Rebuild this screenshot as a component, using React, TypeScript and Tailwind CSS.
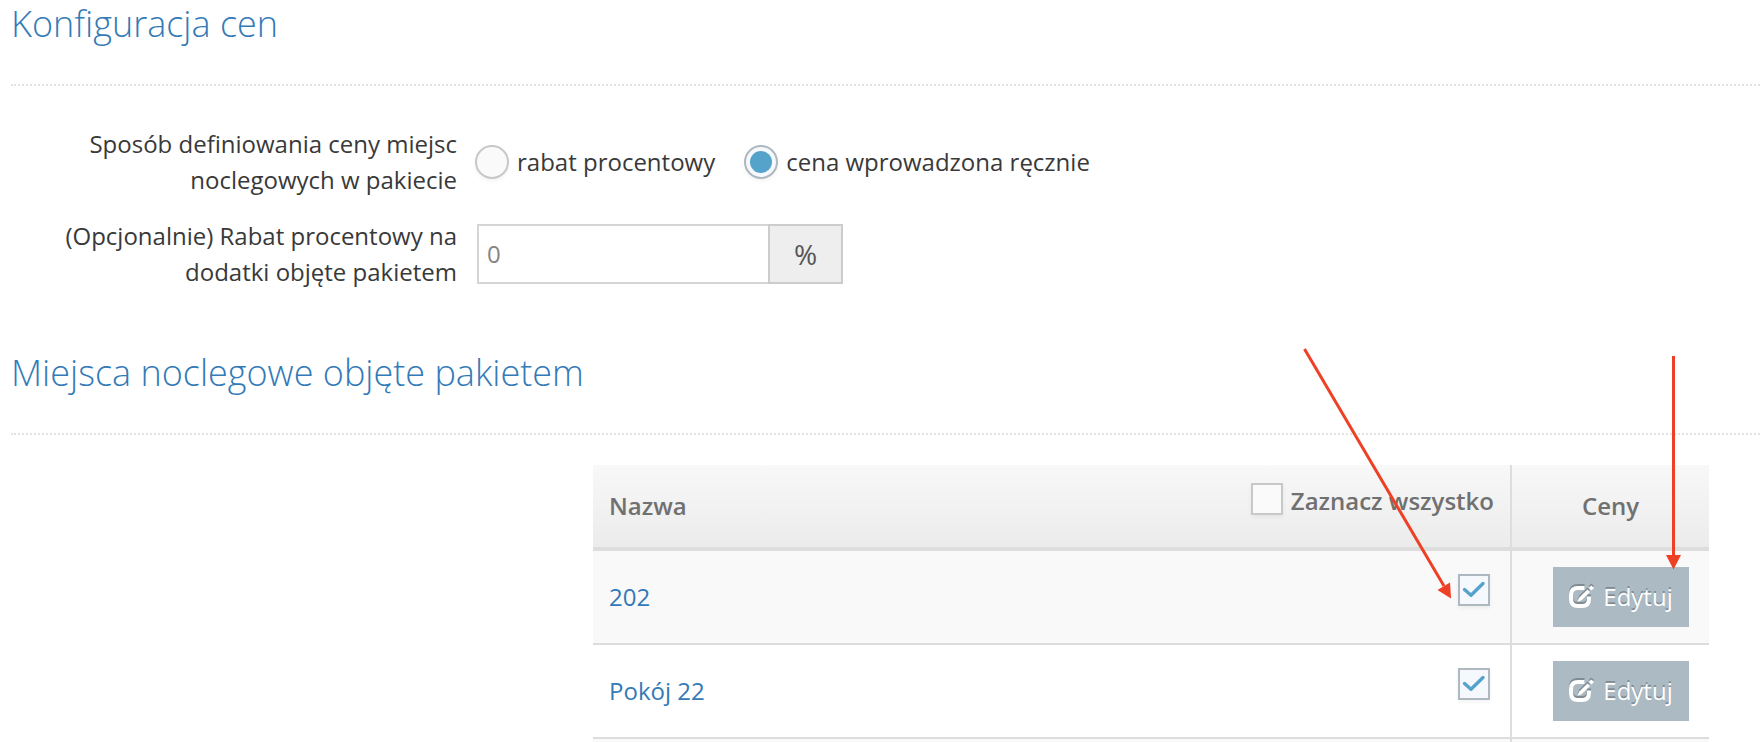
import { useState } from 'react';

interface Place {
    id: number;
    name: string;
}

const places: Place[] = [
    { id: 1, name: '202' },
    { id: 2, name: 'Pokój 22' },
];

interface SectionTitleProps {
    text: string;
}

const SectionTitle = ({ text }: SectionTitleProps) => (
    <h2 className="border-b-2 border-dotted border-[#e2e2e2] pb-9 text-[36px] leading-[48px] font-light text-[#337ab7]">
        {text}
    </h2>
);

interface RadioOptionProps {
    id: string;
    label: string;
    checked: boolean;
    onChange: () => void;
}

const RadioOption = ({ id, label, checked, onChange }: RadioOptionProps) => (
    <div className="flex items-center gap-2">
        <span className="grid h-[34px] w-[34px]">
            <input
                id={id}
                type="radio"
                name="priceMode"
                checked={checked}
                onChange={onChange}
                className="peer col-start-1 row-start-1 h-[34px] w-[34px] appearance-none rounded-full border-2 border-[#c8c8c8] bg-[#fafafa] shadow-[0_2px_4px_rgba(0,0,0,0.05)] checked:border-[#adb8c0] checked:bg-[#f5f8fc]"
            />
            <span className="pointer-events-none col-start-1 row-start-1 hidden h-[22px] w-[22px] place-self-center rounded-full bg-[#55a2cb] peer-checked:block" />
        </span>
        <label htmlFor={id}>{label}</label>
    </div>
);

interface CheckboxProps {
    id: string;
    label?: string;
    checked: boolean;
    onChange: () => void;
}

const Checkbox = ({ id, label, checked, onChange }: CheckboxProps) => (
    <span className="grid h-8 w-8">
        <input
            id={id}
            type="checkbox"
            aria-label={label}
            checked={checked}
            onChange={onChange}
            className="peer col-start-1 row-start-1 h-8 w-8 appearance-none border-2 border-[#c8c8c8] bg-[#fafafa] shadow-[0_2px_4px_rgba(0,0,0,0.05)] checked:border-[#adb8c0] checked:bg-[#f5f8fc]"
        />
        <svg
            viewBox="0 0 32 32"
            fill="none"
            className="pointer-events-none col-start-1 row-start-1 hidden h-8 w-8 peer-checked:block"
        >
            <path d="M6.5 15.500 L13 21.200 L25 9.500" stroke="#55a2cb" strokeWidth="3.4" strokeLinecap="round" strokeLinejoin="round" />
        </svg>
    </span>
);

const EditIcon = () => (
    <svg viewBox="0 0 26 24" fill="none" className="h-6 w-[26px] drop-shadow-[0_-2px_0_rgba(0,0,0,0.25)]">
        <path
            d="M15.500 3 H9 C4.500 3 2 5.500 2 10 V14 C2 18.500 4.500 21 9 21 H13 C17.500 21 20 18.500 20 14 V11.500"
            stroke="#fff"
            strokeWidth="4"
        />
        <path d="M8.500 16.800 L10 12.800 L18.500 4.500 L21 7 L12.500 15.300 Z" fill="#fff" />
        <path d="M19.800 3 L22.300 0.500 L25 3 L22.500 5.500 Z" fill="#fff" />
    </svg>
);

const App = () => {
    const [mode, setMode] = useState<'percent' | 'manual'>('manual');
    const [discount, setDiscount] = useState('');
    const [selected, setSelected] = useState<number[]>([1, 2]);
    const [all, setAll] = useState(false);

    const toggle = (id: number) =>
        setSelected(selected.includes(id) ? selected.filter((item) => item !== id) : [...selected, id]);

    const toggleAll = () => {
        setSelected(all ? [] : places.map((place) => place.id));
        setAll(!all);
    };

    return (
        <main className="h-screen overflow-hidden bg-white pl-[11px] font-['Open_Sans','Noto_Sans',sans-serif] text-[24px] leading-9 text-[#393939]">
            {/* Konfiguracja cen */}
            <section>
                <SectionTitle text="Konfiguracja cen" />
                <div className="mt-10 flex flex-col gap-5">
                    <div className="flex items-center gap-[18px]">
                        <span id="mode-label" className="w-[446px] pl-10 text-right">
                            Sposób definiowania ceny miejsc noclegowych w pakiecie
                        </span>
                        <div role="radiogroup" aria-labelledby="mode-label" className="flex gap-[29px]">
                            <RadioOption
                                id="mode-percent"
                                label="rabat procentowy"
                                checked={mode === 'percent'}
                                onChange={() => setMode('percent')}
                            />
                            <RadioOption
                                id="mode-manual"
                                label="cena wprowadzona ręcznie"
                                checked={mode === 'manual'}
                                onChange={() => setMode('manual')}
                            />
                        </div>
                    </div>
                    <div className="flex items-center gap-5">
                        <label htmlFor="discount" className="w-[446px] pl-10 text-right">
                            (Opcjonalnie) Rabat procentowy na dodatki objęte pakietem
                        </label>
                        <div className="flex h-[60px] w-[366px]">
                            <input
                                id="discount"
                                type="text"
                                placeholder="0"
                                value={discount}
                                onChange={(e) => setDiscount(e.target.value)}
                                className="min-w-0 flex-1 border-2 border-r-0 border-[#d5d5d5] px-2 placeholder:text-[#858585]"
                            />
                            <span className="flex w-[75px] items-center justify-center border-2 border-[#ccc] bg-[#eee] text-[28px] text-[#555]">
                                %
                            </span>
                        </div>
                    </div>
                </div>
            </section>

            {/* Miejsca noclegowe */}
            <section className="mt-[59px]">
                <SectionTitle text="Miejsca noclegowe objęte pakietem" />
                <div className="relative mt-[30px] mr-[51px] ml-[582px]">
                    <table className="w-full border-separate border-spacing-0">
                        <thead>
                            <tr className="h-[86px] bg-linear-to-b from-[#f8f8f8] to-[#ebebeb] text-[#707070]">
                                <th className="border-b-4 border-[#ddd] px-4 text-left font-semibold">Nazwa</th>
                                <th className="w-[280px] border-r-2 border-b-4 border-[#ddd] pr-4 pb-[10px] font-semibold">
                                    <div className="flex items-start justify-end gap-2">
                                        <Checkbox id="select-all" checked={all} onChange={toggleAll} />
                                        <label htmlFor="select-all">Zaznacz wszystko</label>
                                    </div>
                                </th>
                                <th className="w-[197px] border-b-4 border-[#ddd] font-semibold">Ceny</th>
                            </tr>
                        </thead>
                        <tbody>
                            {places.map((place) => (
                                <tr key={place.id} className="h-[94px] odd:bg-[#f9f9f9]">
                                    <td className="border-b-2 border-[#ddd] px-4">
                                        <a href="#" className="text-[#337ab7]">
                                            {place.name}
                                        </a>
                                    </td>
                                    <td className="border-r-2 border-b-2 border-[#ddd] pr-5 pb-[14px]">
                                        <div className="flex justify-end">
                                            <Checkbox
                                                id={`place-${place.id}`}
                                                label={place.name}
                                                checked={selected.includes(place.id)}
                                                onChange={() => toggle(place.id)}
                                            />
                                        </div>
                                    </td>
                                    <td className="border-b-2 border-[#ddd] pr-5">
                                        <button className="ml-auto flex h-[60px] w-[136px] items-center justify-center gap-2 bg-[#abbac3] text-white [text-shadow:0_-2px_0_rgba(0,0,0,0.25)]">
                                            <EditIcon />
                                            Edytuj
                                        </button>
                                    </td>
                                </tr>
                            ))}
                            <tr className="h-[94px] bg-[#f9f9f9]">
                                <td />
                                <td className="border-r-2 border-[#ddd]" />
                                <td />
                            </tr>
                        </tbody>
                    </table>

                    {/* Strzałki */}
                    <svg
                        viewBox="0 0 420 260"
                        className="pointer-events-none absolute -top-[125px] right-0 h-[260px] w-[420px]"
                        fill="#ee4024"
                        stroke="none"
                    >
                        <path d="M15.500 9 L155 246" stroke="#ee4024" strokeWidth="3" />
                        <path d="M148.500 250 L161 242.500 L162 258.500 Z" />
                        <path d="M384.500 16 V218" stroke="#ee4024" strokeWidth="3" />
                        <path d="M377 215 H392 L384.500 229.500 Z" />
                    </svg>
                </div>
            </section>
        </main>
    );
};

export default App;
